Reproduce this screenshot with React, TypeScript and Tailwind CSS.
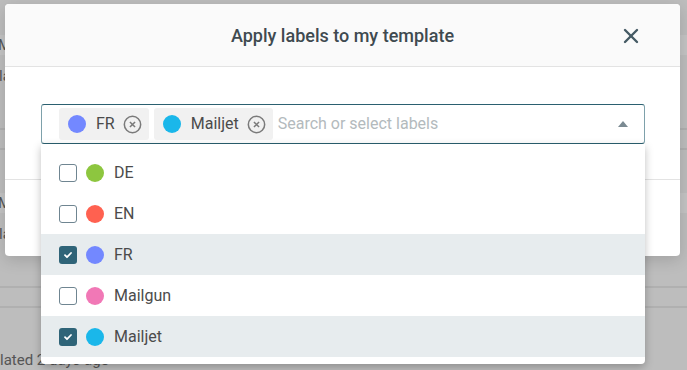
import { X } from "lucide-react";

type Label = { name: string; color: string; checked: boolean };

const labels: Label[] = [
  { name: "DE", color: "#8dc63f", checked: false },
  { name: "EN", color: "#ff6150", checked: false },
  { name: "FR", color: "#7388ff", checked: true },
  { name: "Mailgun", color: "#f178b6", checked: false },
  { name: "Mailjet", color: "#1ab7ea", checked: true },
];

const CircleX = () => (
  <svg width="19" height="19" viewBox="0 0 20 20" fill="none" stroke="#7a7a7a" strokeWidth="1.6">
    <circle cx="10" cy="10" r="8.6" />
    <path d="M7.3 7.3l5.4 5.4M12.7 7.3l-5.4 5.4" />
  </svg>
);

const Chip = ({ name, color }: { name: string; color: string }) => (
  <div className="flex h-8 items-center rounded-[3px] bg-[#f1f1f1] pl-[9px] pr-[7px]">
    <span className="h-[18px] w-[18px] rounded-full" style={{ backgroundColor: color }} />
    <span className="ml-[10px] mr-[8px] text-[16px] text-[#4b4b4b]">{name}</span>
    <CircleX />
  </div>
);

const Checkbox = ({ checked }: { checked: boolean }) =>
  checked ? (
    <span className="flex h-[18px] w-[18px] items-center justify-center rounded-[3px] bg-[#2f6478]">
      <svg width="10" height="10" viewBox="0 0 10 10" fill="none" stroke="#fff" strokeWidth="1.8" strokeLinecap="round" strokeLinejoin="round">
        <path d="M2 5.2l2 2 4-4.2" />
      </svg>
    </span>
  ) : (
    <span className="h-[18px] w-[18px] rounded-[3px] border-[1.5px] border-[#6f8591] bg-white" />
  );

// faded list row of the page under the overlay
const BgRow = () => (
  <div className="flex flex-col">
    <div className="flex h-5 items-center text-[15px] text-[#555] bg-[#c4c4c4] -ml-[2px]">M</div>
    <div className="h-[75px] border-b-2 border-[#b0b0b0] pt-[12px] text-[15px] leading-[18px] text-[#555] -ml-[1px]">la</div>
    <div className="h-5 border-b-2 border-[#b0b0b0]" />
    <div className="h-[43px]" />
  </div>
);

export default function App() {
  return (
    <div className="relative h-[370px] w-[687px] overflow-hidden bg-[#bdbdbd] font-['Roboto',sans-serif]">
      {/* page behind the overlay */}
      <div className="flex flex-col pt-[35px]">
        <BgRow />
        <BgRow />
        <div className="-mt-[1px] text-[15px] leading-[20px] text-[#555]">lated 2 days ago</div>
      </div>

      {/* modal */}
      <div className="absolute left-[5px] top-[4px] w-[675px] rounded-[4px] bg-white shadow-[0_4px_16px_rgba(0,0,0,0.15)]">
        <div className="relative flex h-[63px] items-center justify-center rounded-t-[4px] border-b border-[#e3e3e3] bg-[#fafafa]">
          <h2 className="text-[18px] font-medium text-[#3f4a50]">Apply labels to my template</h2>
          <X className="absolute right-[37px] top-[20px] text-[#455a64]" size={24} strokeWidth={2.4} />
        </div>
        <div className="h-[113px] border-b border-[#e3e3e3]" />
        <div className="flex h-[76px] items-center justify-end pr-[36px]">
          <div className="h-[38px] w-[120px] rounded-[4px] border border-[#7ea1ab]" />
        </div>
      </div>

      {/* select with open dropdown */}
      <div className="absolute left-[41px] top-[104px] w-[604px]">
        <div className="flex h-[40px] items-center gap-[5px] rounded-[3px] border-x border-y border-x-[#7ea1ab] border-y-[#2b6070] pl-[17px] pr-[16px]">
          <Chip name="FR" color="#7388ff" />
          <Chip name="Mailjet" color="#1ab7ea" />
          <span className="flex-1 text-[16px] text-[#b3babd]">Search or select labels</span>
          <svg width="10" height="6" viewBox="0 0 10 6" fill="#7b8a92">
            <path d="M0 6L5 0l5 6z" />
          </svg>
        </div>
        <div className="rounded-b-[4px] bg-white pt-2 pb-[7px] shadow-[0_3px_8px_rgba(0,0,0,0.25)]">
          {labels.map((l) => (
            <div
              key={l.name}
              className={`flex h-[41px] items-center pl-[18px] ${l.checked ? "bg-[#e7ecee]" : "bg-white"}`}
            >
              <Checkbox checked={l.checked} />
              <span className="ml-[9px] h-[18px] w-[18px] rounded-full" style={{ backgroundColor: l.color }} />
              <span className="ml-[10px] text-[16px] text-[#4b4b4b]">{l.name}</span>
            </div>
          ))}
        </div>
      </div>
    </div>
  );
}
